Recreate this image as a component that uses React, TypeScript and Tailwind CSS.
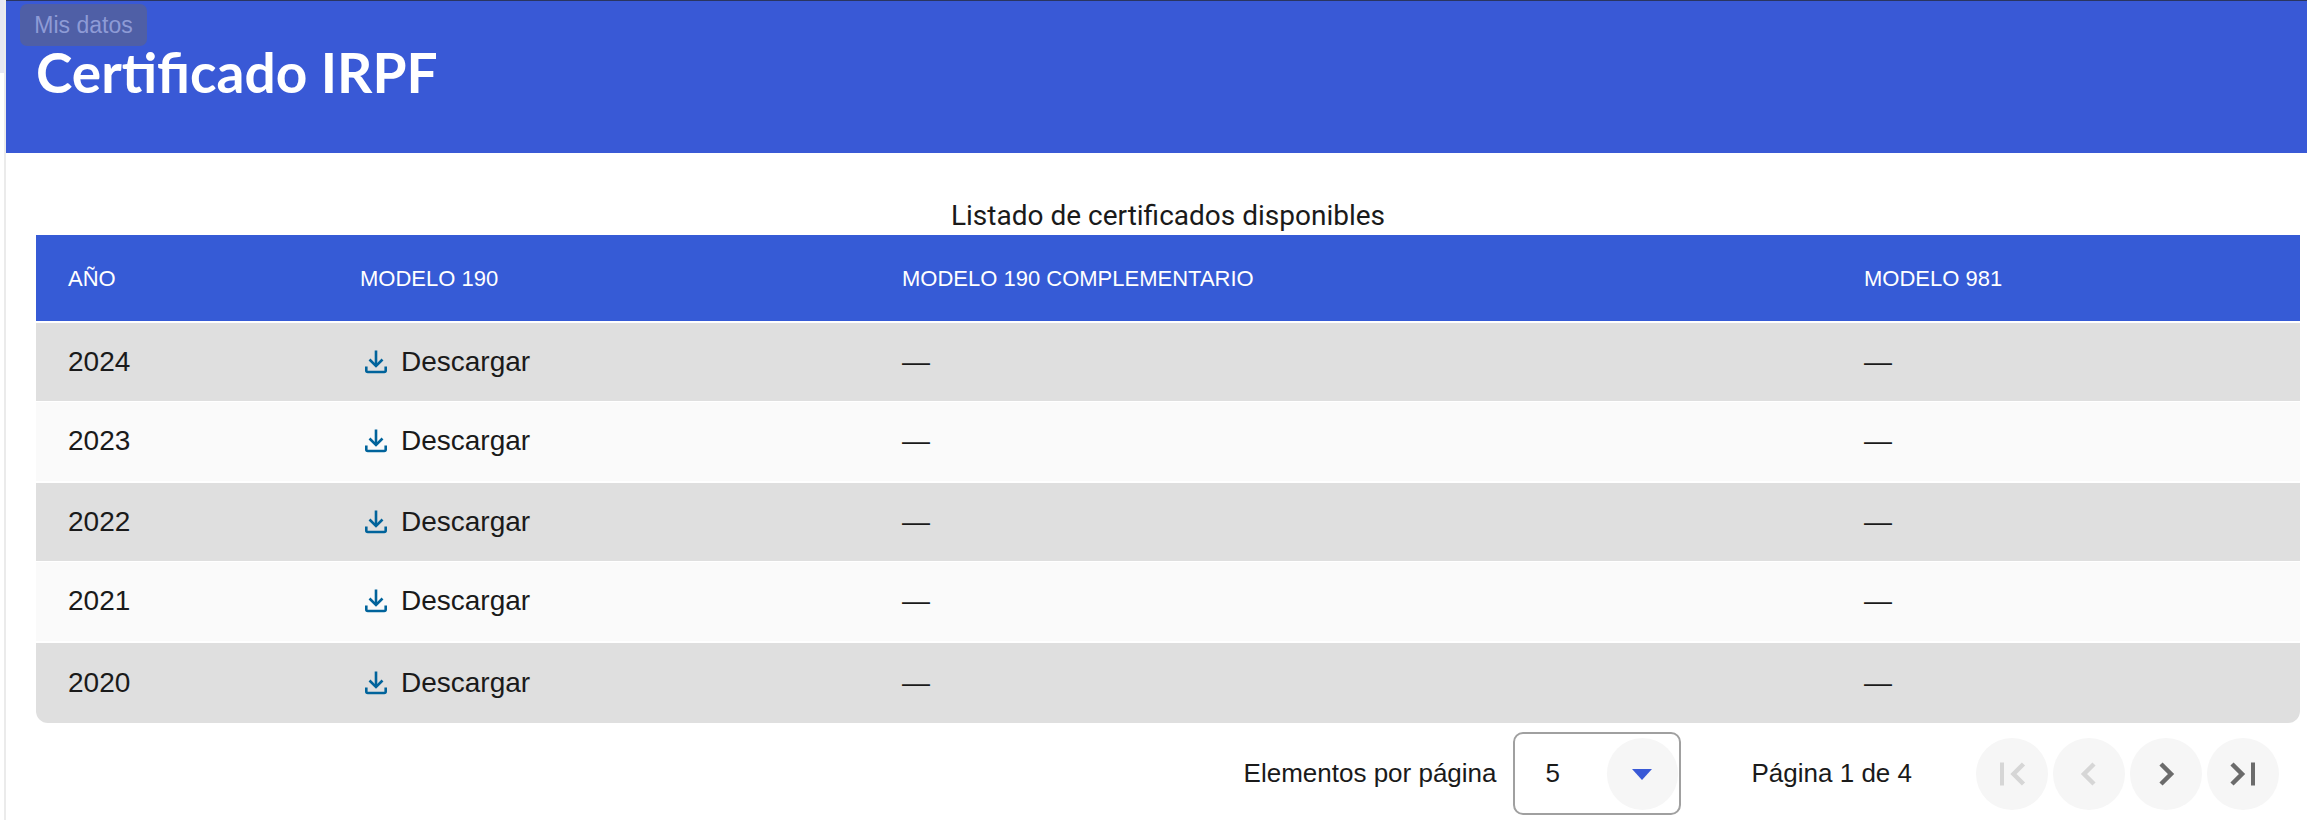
const rows = [
  { year: "2024", cls: "h-[78px] bg-[#dfdfdf]" },
  { year: "2023", cls: "mt-[1px] h-[79px] bg-[#fafafa]" },
  { year: "2022", cls: "mt-[2px] h-[78px] bg-[#dfdfdf]" },
  { year: "2021", cls: "mt-[1px] h-[79px] bg-[#fafafa]" },
  { year: "2020", cls: "mt-[2px] h-[80px] bg-[#dfdfdf]" },
];

function DownloadIcon() {
  return (
    <svg className="ml-[2px]" width="28" height="28" viewBox="0 0 28 28" fill="none" stroke="#00639b" strokeWidth="2.6">
      <path d="M14 2.500v15" />
      <path d="M7.500 11.500l6.500 6.500 6.500-6.500" />
      <path d="M4.300 18.500v4a1.500 1.500 0 0 0 1.500 1.500h16.400a1.500 1.500 0 0 0 1.500-1.500v-4" />
    </svg>
  );
}

function PageButton({ chevron, bar, disabled }: { chevron: string; bar?: number; disabled?: boolean }) {
  const color = disabled ? "#d6d6d6" : "#6b6b6b";
  return (
    <button className="h-[72px] w-[72px] rounded-full bg-[#f6f6f6]">
      <svg width="72" height="72" viewBox="0 0 72 72" fill="none">
        {bar !== undefined && <rect x={bar} y="24.500" width="4" height="23" fill={color} />}
        <path d={chevron} stroke={color} strokeWidth="4.500" />
      </svg>
    </button>
  );
}

export default function App() {
  return (
    <div className="h-[820px] overflow-hidden bg-white font-['Liberation_Sans',sans-serif] text-[#1a1a1a]">
      <div className="flex h-full">
        <div className="flex w-[6px] shrink-0">
          <div className="h-[73px] w-[4px] bg-[#e6e7f2]" />
          <div className="w-[2px] bg-[#ebebeb]" />
        </div>
        <main className="min-w-0 flex-1">
          <header className="relative h-[153px] border-t border-[#2a3560] bg-[#3959d6] pl-[30px] pt-[39px]">
            <div className="absolute left-[14px] top-[3px] flex h-[42px] w-[127px] items-center justify-center rounded-[7px] bg-[#4f5fa6] text-[23px] text-[#8e9bd6]">
              Mis datos
            </div>
            <h1 className="font-['Lato',sans-serif] text-[55px] leading-[64px] font-bold text-white">
              Certificado IRPF
            </h1>
          </header>

          <section className="mr-[7px] ml-[30px]">
            <p className="flex h-[82px] items-end justify-center pb-[2px] font-['Roboto',sans-serif] text-[28px] leading-[34px]">
              Listado de certificados disponibles
            </p>
            <div className="grid h-[86px] grid-cols-[324px_542px_962px_1fr] items-center bg-[#365bd6] text-[22px] text-white">
              <span className="pl-[32px]">AÑO</span>
              <span>MODELO 190</span>
              <span>MODELO 190 COMPLEMENTARIO</span>
              <span>MODELO 981</span>
            </div>
            <div className="mt-[2px] overflow-hidden rounded-b-[12px]">
              {rows.map((row) => (
                <div
                  key={row.year}
                  className={`grid grid-cols-[324px_542px_962px_1fr] items-center pb-[1px] text-[28px] ${row.cls}`}
                >
                  <span className="pl-[32px]">{row.year}</span>
                  <span className="flex items-center gap-[11px]">
                    <DownloadIcon />
                    Descargar
                  </span>
                  <span>—</span>
                  <span>—</span>
                </div>
              ))}
            </div>
          </section>

          <footer className="mt-[9px] mr-[28px] flex items-center justify-end">
            <span className="text-[26px]">Elementos por página</span>
            <div className="mr-[71px] ml-[16px] flex h-[83px] w-[168px] items-center justify-between rounded-[10px] border-2 border-[#a0a0a0] pr-[1px] pl-[31px] text-[26px]">
              5
              <span className="flex h-[72px] w-[71px] items-center justify-center rounded-full bg-[#f6f6f6]">
                <span className="mt-[2px] h-0 w-0 border-x-[10px] border-t-[11px] border-x-transparent border-t-[#3959d6]" />
              </span>
            </div>
            <span className="mr-[64px] text-[26px]">Página 1 de 4</span>
            <div className="flex gap-[5px]">
              <PageButton disabled bar={24} chevron="M47.500 26L37.500 36L47.500 46" />
              <PageButton disabled chevron="M41 26L31 36L41 46" />
              <PageButton chevron="M31 26L41 36L31 46" />
              <PageButton bar={44} chevron="M25 26L35 36L25 46" />
            </div>
          </footer>
        </main>
      </div>
    </div>
  );
}
